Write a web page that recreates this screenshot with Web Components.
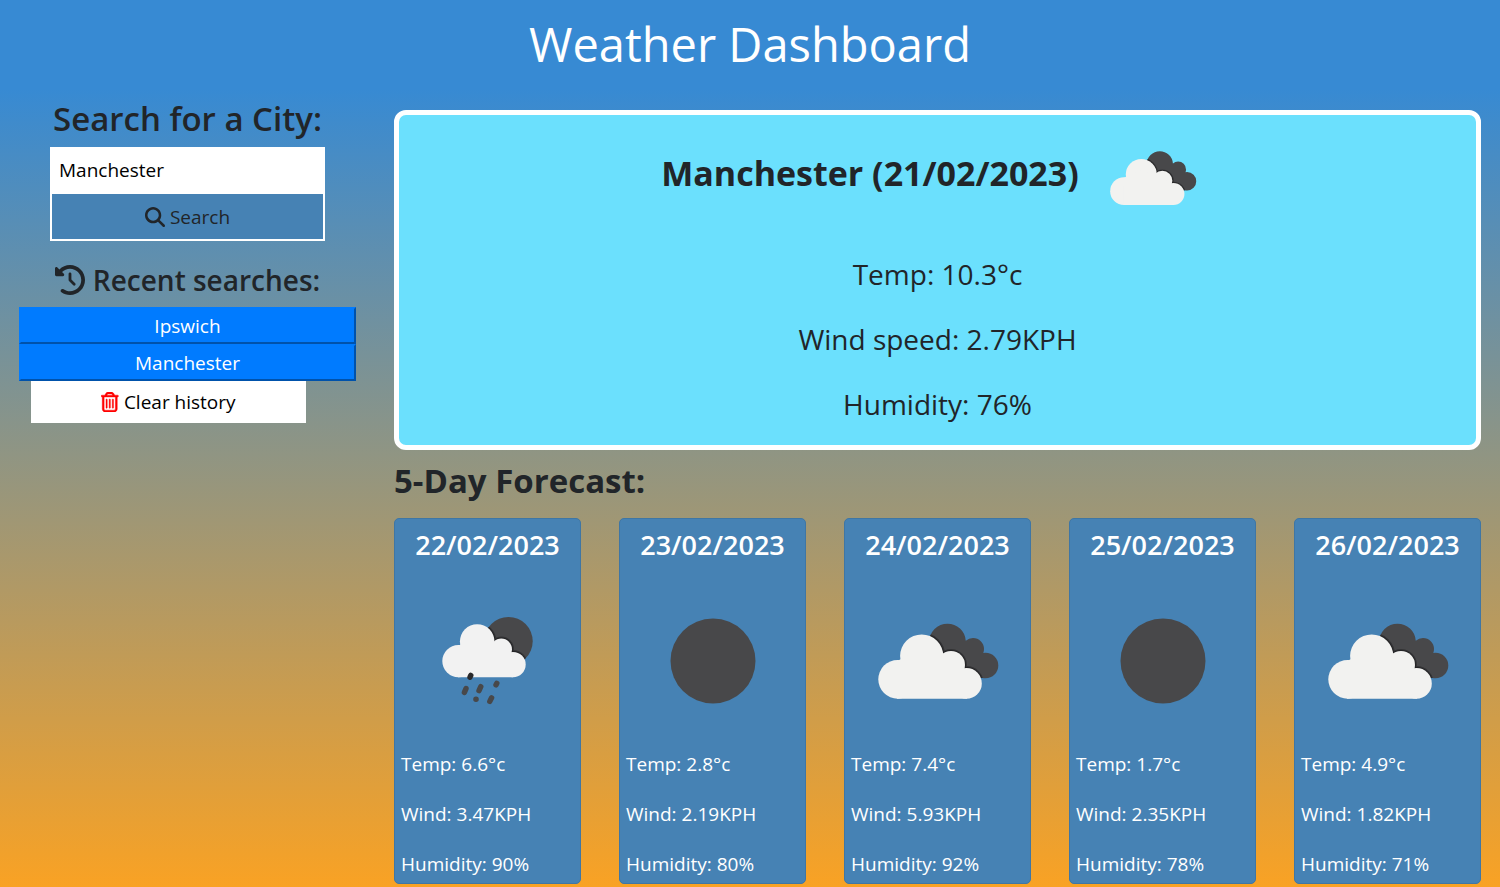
<!DOCTYPE html>
<html lang="en">
<head>
<meta charset="utf-8">
<meta name="viewport" content="width=device-width, initial-scale=1">
<title>Weather Dashboard</title>
<style>
  html { min-height: 100%; }
  body {
    margin: 0;
    min-height: 100vh;
    color: #212529;
    font: 19px/30px "Open Sans", "Noto Sans", sans-serif;
    background: linear-gradient(#378ad3 10%, #f9a224) no-repeat #f9a224;
  }
</style>
</head>
<body>
<weather-dashboard></weather-dashboard>

<script>
const define = (name, html, setup) => {
  const template = document.createElement('template');
  template.innerHTML = html;
  customElements.define(name, class extends HTMLElement {
    constructor() {
      super();
      this.attachShadow({ mode: 'open' }).append(template.content.cloneNode(true));
    }
    connectedCallback() { if (setup) setup(this, this.shadowRoot); }
  });
};

/* Weather pictures share one square view box */
const overcast = `
  <defs>
    <clipPath id="back"><circle cx="107.5" cy="42" r="18.3"/><circle cx="133" cy="49" r="11"/><circle cx="145.5" cy="65.5" r="12.8"/><path d="M107 42 133 42 145 66 143 78 120 78Z"/></clipPath>
    <g id="front"><circle cx="57.7" cy="79.3" r="19.4"/><circle cx="81.7" cy="56" r="21.6"/><circle cx="111" cy="65" r="14"/><circle cx="126.5" cy="83.4" r="15.3"/><path d="M57 61 80 50 111 60 127 72V98.7H57Z"/></g>
  </defs>
  <g clip-path="url(#back)">
    <rect x="80" y="15" width="85" height="70" fill="#48484a"/>
    <use href="#front" fill="#343436" stroke="#343436" stroke-width="4"/>
    <use href="#front" fill="#242426" stroke="#242426" stroke-width="2"/>
  </g>
  <use href="#front" fill="#f2f2f0"/>`;
const pictures = {
  clouds: overcast,
  clear: '<circle cx="98" cy="61" r="42.5" fill="#48484a"/>',
  rain: `
  <defs>
    <clipPath id="back"><circle cx="118.5" cy="41.2" r="24.2"/></clipPath>
    <g id="front"><circle cx="68.5" cy="61.1" r="16.2"/><circle cx="87.2" cy="41.6" r="17.3"/><circle cx="111.3" cy="49.3" r="10.7"/><circle cx="123" cy="64.6" r="12.7"/><path d="M68 46 86 36 111 44 123 54V77.3H68Z"/></g>
  </defs>
  <g clip-path="url(#back)">
    <rect x="90" y="15" width="60" height="55" fill="#48484a"/>
    <use href="#front" fill="#343436" stroke="#343436" stroke-width="4"/>
    <use href="#front" fill="#242426" stroke="#242426" stroke-width="2"/>
  </g>
  <use href="#front" fill="#f2f2f2"/>
  <g stroke="#48484a" stroke-width="5.4" stroke-linecap="round">
    <path d="M80.8 75.4 80 77.2" stroke="#29292b"/>
    <path d="M76 88.6 74.4 92.4M90.8 86.6 89 90.6M106.800 83.4 106 84.8M85.9 99.3h.2M101.6 97.8 99.8 101.4"/>
  </g>`
};
define('weather-icon', `
  <style>
    :host { display: block; flex: none; width: 170px; }
    svg { display: block; width: 100%; height: auto; }
  </style>
  <svg viewBox="13 -24 170 170" aria-hidden="true"></svg>`,
  (host, root) => { root.querySelector('svg').innerHTML = pictures[host.getAttribute('kind')]; });

const glyphs = {
  search: '<path d="M416 208c0 45.900-14.900 88.300-40 122.700L502.600 457.400c12.500 12.500 12.500 32.800 0 45.300s-32.800 12.500-45.300 0L330.700 376c-34.400 25.200-76.800 40-122.700 40C93.100 416 0 322.900 0 208S93.100 0 208 0S416 93.100 416 208zM208 352a144 144 0 1 0 0-288 144 144 0 1 0 0 288z"/>',
  history: '<path d="M75 75L41 41C25.900 25.900 0 36.600 0 57.900V168c0 13.300 10.700 24 24 24H134.100c21.400 0 32.100-25.900 17-41l-30.800-30.800C155 85.500 203 64 256 64c106 0 192 86 192 192s-86 192-192 192c-40.800 0-78.600-12.700-109.700-34.400c-14.500-10.100-34.400-6.600-44.600 7.900s-6.600 34.400 7.900 44.600C151.200 495 201.700 512 256 512c141.400 0 256-114.600 256-256S397.400 0 256 0C185.300 0 121.300 28.700 75 75zm181 53c-13.300 0-24 10.700-24 24V256c0 6.400 2.500 12.500 7 17l72 72c9.400 9.400 24.600 9.400 33.900 0s9.400-24.600 0-33.900l-65-65V152c0-13.300-10.700-24-24-24z"/>',
  trash: '<path d="M170.500 51.600L151.500 80h145l-19-28.400c-1.500-2.200-4-3.600-6.700-3.600H177.100c-2.700 0-5.200 1.300-6.700 3.600zm147-26.600L354.200 80H424c13.300 0 24 10.700 24 24s-10.700 24-24 24h-8V432c0 44.200-35.800 80-80 80H112c-44.200 0-80-35.800-80-80V128H24c-13.300 0-24-10.700-24-24S10.700 80 24 80H93.800l36.700-55.100C140.900 9.400 158.400 0 177.100 0h93.700c18.700 0 36.200 9.400 46.600 24.900zM80 128V432c0 17.700 14.300 32 32 32H336c17.700 0 32-14.300 32-32V128H80zm80 64V400c0 8.800-7.200 16-16 16s-16-7.200-16-16V192c0-8.800 7.200-16 16-16s16 7.200 16 16zm80 0V400c0 8.800-7.200 16-16 16s-16-7.200-16-16V192c0-8.800 7.200-16 16-16s16 7.200 16 16zm80 0V400c0 8.800-7.200 16-16 16s-16-7.200-16-16V192c0-8.800 7.200-16 16-16s16 7.200 16 16z"/>'
};
define('glyph-icon', `
  <style>
    :host { display: block; flex: none; height: 20px; }
    svg { display: block; height: 100%; fill: currentColor; stroke: currentColor; stroke-width: var(--glyph-stroke, 0); }
  </style>
  <svg aria-hidden="true"></svg>`,
  (host, root) => {
    const svg = root.querySelector('svg'), name = host.getAttribute('name');
    svg.setAttribute('viewBox', name === 'trash' ? '0 0 448 512' : '0 0 512 512');
    svg.innerHTML = glyphs[name];
  });

define('page-header', `
  <style>
    :host { display: block; text-align: center; color: #fff; }
    h1 { margin: 0; padding: 8px 0 16px; font-size: 47px; line-height: 72px; font-weight: 400; }
  </style>
  <header><h1><slot></slot></h1></header>`);

define('city-search', `
  <style>
    :host { display: block; }
    form { display: flex; flex-direction: column; align-items: center; }
    h2 { margin: 0 0 6px; font-size: 33px; line-height: 45px; font-weight: 600; white-space: nowrap; }
    input, button { box-sizing: border-box; width: 275px; max-width: 100%; font: inherit; border-radius: 0; }
    input { height: 45px; padding: 2px 9px; border: 0; background: #fff; color: #000; outline: 0; }
    button {
      display: flex; align-items: center; justify-content: center; gap: 5px;
      height: 49px; border: 2px solid #fff; background: #4682b4; color: #212529;
    }
  </style>
  <form onsubmit="return false">
    <h2><label for="city">Search for a City:</label></h2>
    <input id="city" type="text" value="Manchester">
    <button type="submit"><glyph-icon name="search"></glyph-icon>Search</button>
  </form>`);

define('recent-searches', `
  <style>
    :host { display: block; }
    h3 {
      display: flex; align-items: center; justify-content: center; gap: 8px;
      margin: 0 0 9px; font-size: 28px; line-height: 36px; font-weight: 600; white-space: nowrap;
    }
    h3 glyph-icon { height: 30px; }
    ul { list-style: none; margin: 0; padding: 0; }
    li button {
      display: block; box-sizing: border-box; width: 100%; height: 37px; padding: 0;
      border: 2px outset #007bff; border-radius: 0; background: #007bff; color: #fff; font: inherit;
    }
    .clear {
      display: flex; align-items: center; justify-content: center; gap: 5px;
      box-sizing: border-box; width: 275px; height: 42px; margin: 0 12px; padding: 0;
      border: 0; background: #fff; color: #000; font: inherit;
    }
    .clear glyph-icon { color: red; --glyph-stroke: 10px; }
  </style>
  <section>
    <h3><glyph-icon name="history"></glyph-icon>Recent searches:</h3>
    <ul>
      <li><button type="button">Ipswich</button></li>
      <li><button type="button">Manchester</button></li>
    </ul>
    <button class="clear" type="button"><glyph-icon name="trash"></glyph-icon>Clear history</button>
  </section>`);

define('current-weather', `
  <style>
    :host { display: block; }
    article {
      padding: 2px 0 18px; border: 5px solid #fff; border-radius: 12px;
      background: #6be0fd; text-align: center; font-size: 28px; line-height: 45px;
    }
    .title { display: flex; align-items: center; justify-content: center; gap: 13px; margin-bottom: 13px; }
    h2 { margin: 0; padding-bottom: 10px; font-size: 34px; line-height: 45px; font-weight: 700; }
    weather-icon { width: 122px; }
    .readings { display: flex; flex-direction: column; gap: 20px; }
    ::slotted(p) { margin: 0; }
  </style>
  <article>
    <div class="title"><h2><slot name="title"></slot></h2><weather-icon kind="clouds"></weather-icon></div>
    <div class="readings"><slot></slot></div>
  </article>`);

define('forecast-card', `
  <style>
    :host { display: block; }
    article {
      display: flex; flex-direction: column; padding: 4px 6px;
      border: 1px solid #3f76a4; border-radius: 5px; background: #4682b4; color: #fff;
    }
    h4 { margin: 0 0 10px; font-size: 27px; line-height: 43px; font-weight: 600; text-align: center; }
    weather-icon { align-self: center; margin-bottom: 3px; }
    .readings { display: flex; flex-direction: column; gap: 20px; }
    ::slotted(p) { margin: 0; }
  </style>
  <article>
    <h4></h4>
    <weather-icon></weather-icon>
    <div class="readings"><slot></slot></div>
  </article>`,
  (host, root) => {
    root.querySelector('h4').textContent = host.getAttribute('date');
    const icon = document.createElement('weather-icon');
    icon.setAttribute('kind', host.getAttribute('kind'));
    root.querySelector('weather-icon').replaceWith(icon);
  });

const days = [
  ['22/02/2023', 'rain', '6.6', '3.47', 90],
  ['23/02/2023', 'clear', '2.8', '2.19', 80],
  ['24/02/2023', 'clouds', '7.4', '5.93', 92],
  ['25/02/2023', 'clear', '1.7', '2.35', 78],
  ['26/02/2023', 'clouds', '4.9', '1.82', 71]
];
define('forecast-list', `
  <style>
    :host { display: block; }
    h3 { margin: 0 0 15px; font-size: 33px; line-height: 45px; font-weight: 700; }
    .days { display: grid; grid-template-columns: repeat(5, 1fr); gap: 38px; }
  </style>
  <section>
    <h3>5-Day Forecast:</h3>
    <div class="days">${days.map(([date, kind, temp, wind, humidity]) => `
      <forecast-card date="${date}" kind="${kind}">
        <p>Temp: ${temp}°c</p><p>Wind: ${wind}KPH</p><p>Humidity: ${humidity}%</p>
      </forecast-card>`).join('')}
    </div>
  </section>`);

define('weather-dashboard', `
  <style>
    :host { display: block; }
    .columns { display: grid; grid-template-columns: 1fr 3fr; }
    aside { min-width: 0; padding: 0 19px; }
    recent-searches { margin-top: 21px; }
    main { min-width: 0; padding: 14px 19px 3px; }
    forecast-list { margin-top: 8px; }
  </style>
  <page-header>Weather Dashboard</page-header>
  <div class="columns">
    <aside>
      <city-search></city-search>
      <recent-searches></recent-searches>
    </aside>
    <main>
      <current-weather>
        <span slot="title">Manchester (21/02/2023)</span>
        <p>Temp: 10.3°c</p>
        <p>Wind speed: 2.79KPH</p>
        <p>Humidity: 76%</p>
      </current-weather>
      <forecast-list></forecast-list>
    </main>
  </div>`);
</script>
</body>
</html>
